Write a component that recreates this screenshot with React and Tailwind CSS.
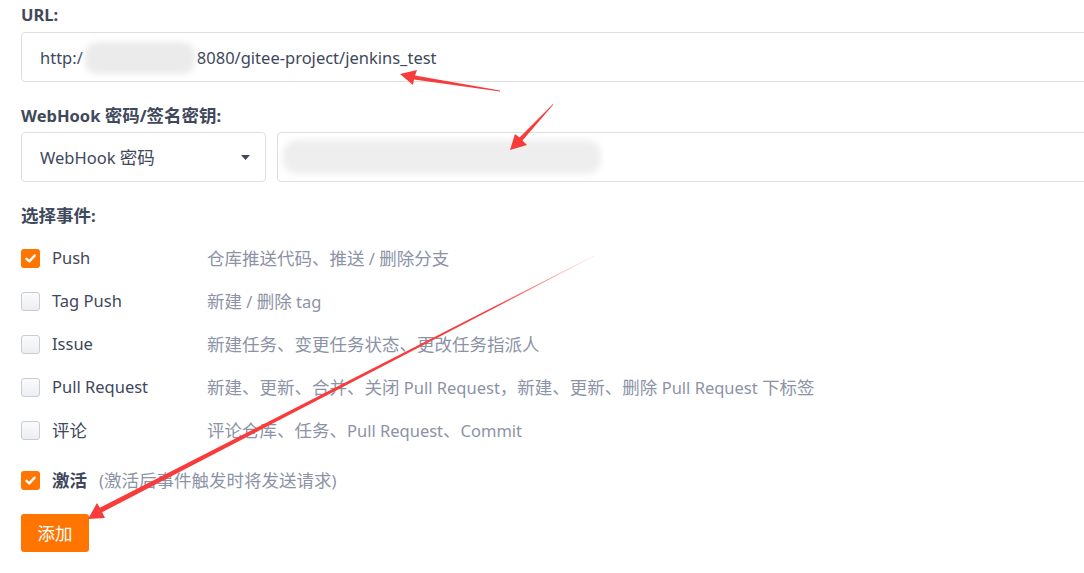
import React from "react";

const events = [
  { label: "Push", desc: "仓库推送代码、推送 / 删除分支", checked: true },
  { label: "Tag Push", desc: "新建 / 删除 tag", checked: false },
  { label: "Issue", desc: "新建任务、变更任务状态、更改任务指派人", checked: false },
  {
    label: "Pull Request",
    desc: "新建、更新、合并、关闭 Pull Request，新建、更新、删除 Pull Request 下标签",
    checked: false,
  },
  { label: "评论", desc: "评论仓库、任务、Pull Request、Commit", checked: false },
];

function T({ children }) {
  const parts = String(children).split(/([\u3000-\u9fff\uff00-\uffef]+)/);
  return (
    <>
      {parts.map((p, i) =>
        /[\u3000-\u9fff\uff00-\uffef]/.test(p) ? (
          <span key={i} className="text-[17.5px]">
            {p}
          </span>
        ) : (
          <React.Fragment key={i}>{p}</React.Fragment>
        )
      )}
    </>
  );
}

function Checkbox({ checked }) {
  if (checked) {
    return (
      <span className="flex h-[19px] w-[19px] shrink-0 items-center justify-center rounded-[3px] bg-[#ff7500]">
        <svg width="13" height="13" viewBox="0 0 13 13">
          <path d="M2.5 6.8 L5.3 9.4 L10.6 3.6" fill="none" stroke="#fff" strokeWidth="2.4" strokeLinecap="round" strokeLinejoin="round" />
        </svg>
      </span>
    );
  }
  return (
    <span className="block h-[19px] w-[19px] shrink-0 rounded-[3px] border border-[#c9ccd4] bg-gradient-to-b from-[#fbfbfc] to-[#eceef2]" />
  );
}

export default function App() {
  return (
    <div
      className="relative h-[573px] w-[1084px] overflow-hidden bg-white text-[16.5px] text-[#40485b]"
      style={{ fontFamily: '"Noto Sans", "Noto Sans CJK SC", sans-serif' }}
    >
      <div className="pl-[21px] pt-[5px]">
        <div className="h-[20px] leading-[20px] font-bold">URL:</div>
        <div className="mt-[7px] flex h-[50px] w-[1080px] items-center rounded-[4px] border border-[#dcdee3] pl-[18px] pt-[2px]">
          <span>http:/</span>
          <span className="relative mx-[2px] h-[32px] w-[110px]">
            <span className="absolute inset-0 rounded-[12px] bg-[#ebebeb] blur-[3px]" />
          </span>
          <span>8080/gitee-project/jenkins_test</span>
        </div>

        <div className="mt-[23px] h-[20px] whitespace-pre leading-[20px] font-bold">
          <T>WebHook 密码/签名密钥:</T>
        </div>
        <div className="mt-[7px] flex h-[50px] gap-[11px] overflow-hidden">
          <div className="flex w-[245px] shrink-0 items-center justify-between rounded-[4px] border border-[#dcdee3] pl-[18px] pr-[15px]">
            <span className="whitespace-pre">
              <T>WebHook 密码</T>
            </span>
            <svg width="9" height="5" viewBox="0 0 9 5">
              <path d="M0 0 L9 0 L4.5 5 Z" fill="#40485b" />
            </svg>
          </div>
          <div className="flex w-[820px] shrink-0 items-center rounded-[4px] border border-[#dcdee3] pl-[5px]">
            <span className="relative h-[34px] w-[318px]">
              <span className="absolute inset-0 rounded-[14px] bg-[#eeeeee] blur-[3px]" />
            </span>
          </div>
        </div>

        <div className="mt-[23px] h-[20px] leading-[20px] font-bold">
          <T>选择事件:</T>
        </div>
        <div className="mt-[11px] flex flex-col">
          {events.map((e) => (
            <div key={e.label} className="flex h-[43px] items-center pt-[1px]">
              <Checkbox checked={e.checked} />
              <span className="ml-[12px] w-[155px] shrink-0 whitespace-pre">
                <T>{e.label}</T>
              </span>
              <span className="whitespace-pre text-[#8c93a6]">
                <T>{e.desc}</T>
              </span>
            </div>
          ))}
        </div>

        <div className="mt-[8px] flex h-[42px] items-center">
          <Checkbox checked />
          <span className="ml-[12px] font-bold">
            <T>激活</T>
          </span>
          <span className="ml-[12px] text-[#8c93a6]">
            <T>(激活后事件触发时将发送请求)</T>
          </span>
        </div>

        <button className="mt-[13px] flex h-[38px] w-[68px] items-center justify-center rounded-[3px] bg-[#ff7500] text-[17.5px] text-white">
          添加
        </button>
      </div>

      <svg className="pointer-events-none absolute left-0 top-0" width="1084" height="573">
        <defs>
          <linearGradient id="fade" gradientUnits="userSpaceOnUse" x1="595" y1="255" x2="88" y2="519">
            <stop offset="0" stopColor="#f83b3b" stopOpacity="0.1" />
            <stop offset="0.2" stopColor="#f83b3b" stopOpacity="1" />
            <stop offset="1" stopColor="#f83b3b" stopOpacity="1" />
          </linearGradient>
        </defs>
        <polygon points="400,74 417,70 415,75.5 500,90.6 500,91.4 414,79.5 413,85" fill="#f83b3b" />
        <polygon points="510,150 515,134 519.5,137.6 553,104 553.4,104.4 522.5,140.4 527,145" fill="#f83b3b" />
        <polygon points="88,519 97,503 99.8,507.8 595,255 595.3,255.6 102.2,512.2 105,518" fill="url(#fade)" />
      </svg>
    </div>
  );
}
